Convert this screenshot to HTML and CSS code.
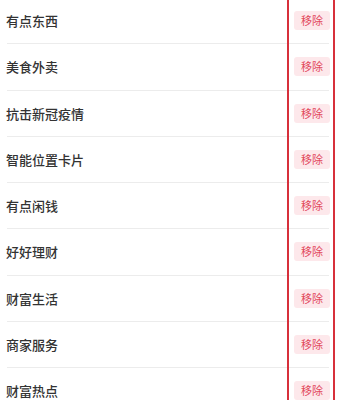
FILE: index.html
```html
<!DOCTYPE html>
<html lang="zh-CN">
<head>
<meta charset="utf-8">
<link rel="stylesheet" href="styles.css">
</head>
<body>
<div class="page">
  <ul class="list">
    <li class="row"><span class="name">有点东西</span><span class="remove">移除</span></li>
    <li class="row"><span class="name">美食外卖</span><span class="remove">移除</span></li>
    <li class="row"><span class="name">抗击新冠疫情</span><span class="remove">移除</span></li>
    <li class="row"><span class="name">智能位置卡片</span><span class="remove">移除</span></li>
    <li class="row"><span class="name">有点闲钱</span><span class="remove">移除</span></li>
    <li class="row"><span class="name">好好理财</span><span class="remove">移除</span></li>
    <li class="row"><span class="name">财富生活</span><span class="remove">移除</span></li>
    <li class="row"><span class="name">商家服务</span><span class="remove">移除</span></li>
    <li class="row"><span class="name">财富热点</span><span class="remove">移除</span></li>
  </ul>
  <div class="highlight"></div>
</div>
</body>
</html>
```
FILE: styles.css
```css
html, body {
  margin: 0;
  padding: 0;
  background: #ffffff;
}
body {
  width: 338px;
  height: 400px;
  overflow: hidden;
  font-family: "Noto Sans CJK SC", "Noto Sans", sans-serif;
}
.page {
  position: relative;
  height: 400px;
}
.list {
  list-style: none;
  margin: -2px 0 0 0;
  padding: 0 9px 0 7px;
}
.row {
  display: flex;
  align-items: center;
  justify-content: space-between;
  height: 45.25px;
  border-bottom: 1px solid #ececec;
}
.name {
  margin-left: -1px;
  font-size: 13px;
  font-weight: 500;
  color: #333333;
  line-height: 1;
}
.remove {
  display: inline-block;
  padding: 0 7px;
  height: 19px;
  line-height: 19px;
  font-size: 11px;
  color: #e2475b;
  background: #fde8eb;
  border-radius: 3px;
  margin-right: -1px;
}
.highlight {
  position: absolute;
  top: -4px;
  bottom: -4px;
  left: 287px;
  width: 44px;
  border: 2px solid #d7303b;
}
```
